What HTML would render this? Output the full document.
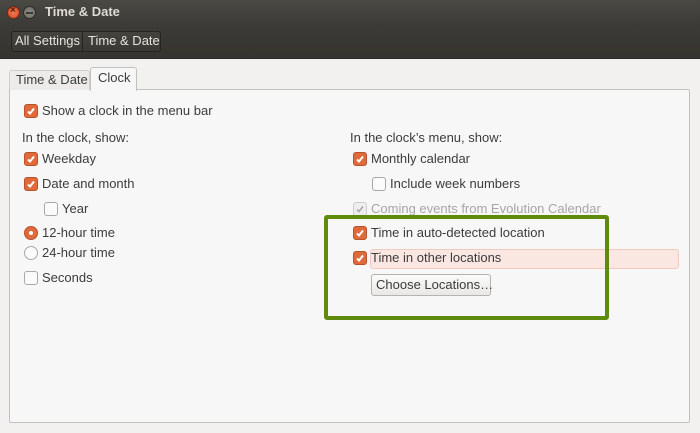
<!DOCTYPE html>
<html><head><style>
*{margin:0;padding:0;box-sizing:border-box}
body{width:700px;height:433px;background:#f2f1f0;font-family:"Liberation Sans","DejaVu Sans",sans-serif;font-size:13px;color:#3c3c3c;position:relative;overflow:hidden}
.a{position:absolute;white-space:nowrap}
.title{left:0;top:0;width:700px;height:25px;background:linear-gradient(#4a4944,#3c3b37);}
.tool{left:0;top:25px;width:700px;height:34px;background:linear-gradient(#3c3b37,#35342f);border-bottom:1px solid #2a2926}
.cb{position:absolute;width:14px;height:14px;border-radius:3px;background:#df6a3b;border:1px solid #b8532c}
.cb svg{position:absolute;left:1px;top:1px}
.ub{position:absolute;width:14px;height:14px;border-radius:3px;background:#fbfbfb;border:1px solid #a9a9a9}
.t{position:absolute;white-space:nowrap;line-height:16px}
</style></head><body>
<div class="a title"></div>
<div class="a" style="left:7px;top:6px;width:13px;height:13px;border-radius:50%;background:radial-gradient(#f07a56,#d4461f);border:1px solid #6b2a18"></div>
<div class="a" style="left:10px;top:5px;color:#5a1b0b;font-size:10px;font-weight:bold">×</div>
<div class="a" style="left:23px;top:6px;width:13px;height:13px;border-radius:50%;background:radial-gradient(#8d8b85,#6a6964);border:1px solid #2d2c29"></div>
<div class="a" style="left:26px;top:12px;width:7px;height:1.5px;background:#3c3b37"></div>
<div class="a" style="left:45px;top:4px;color:#dfdbd2;font-weight:bold;font-size:13px">Time &amp; Date</div>
<div class="a tool"></div>
<div class="a" style="left:11px;top:31px;width:150px;height:21px;border:1px solid #25241f;border-radius:3px;background:linear-gradient(#44433e,#3a3935)"></div>
<div class="a" style="left:82px;top:32px;width:1px;height:19px;background:#25241f"></div>
<div class="a" style="left:15px;top:33px;color:#e6e3dc;font-size:13px">All Settings</div>
<div class="a" style="left:88px;top:33px;color:#e6e3dc;font-size:13px">Time &amp; Date</div>
<!-- panel -->
<div class="a" style="left:9px;top:89px;width:681px;height:334px;background:#f7f7f7;border:1px solid #c2c1be;border-radius:2px"></div>
<div class="a" style="left:9px;top:70px;width:81px;height:20px;border:1px solid #cfcecb;border-bottom:none;border-radius:3px 3px 0 0;background:#ecebe9"></div>
<div class="a" style="left:16px;top:72px;">Time &amp; Date</div>
<div class="a" style="left:90px;top:67px;width:47px;height:24px;border:1px solid #c2c1be;border-bottom:none;border-radius:3px 3px 0 0;background:#f7f7f7"></div>
<div class="a" style="left:98px;top:70px;font-size:13px">Clock</div>

<div class="cb" style="left:24px;top:104px"><svg width="10" height="10"><path d="M2 5.5l2 2 4-5" stroke="#fff" stroke-width="2" fill="none"/></svg></div>
<div class="t" style="left:42px;top:103px">Show a clock in the menu bar</div>
<div class="t" style="left:22px;top:130px">In the clock, show:</div>
<div class="cb" style="left:24px;top:152px"><svg width="10" height="10"><path d="M2 5.5l2 2 4-5" stroke="#fff" stroke-width="2" fill="none"/></svg></div>
<div class="t" style="left:42px;top:151px">Weekday</div>
<div class="cb" style="left:24px;top:177px"><svg width="10" height="10"><path d="M2 5.5l2 2 4-5" stroke="#fff" stroke-width="2" fill="none"/></svg></div>
<div class="t" style="left:42px;top:176px">Date and month</div>
<div class="ub" style="left:44px;top:202px"></div>
<div class="t" style="left:62px;top:201px">Year</div>
<div class="a" style="left:24px;top:226px;width:14px;height:14px;border-radius:50%;background:#df6a3b;border:1px solid #b8532c"></div>
<div class="a" style="left:29px;top:231px;width:4px;height:4px;border-radius:50%;background:#fff"></div>
<div class="t" style="left:42px;top:225px">12-hour time</div>
<div class="a" style="left:24px;top:246px;width:14px;height:14px;border-radius:50%;background:#fbfbfb;border:1px solid #a9a9a9"></div>
<div class="t" style="left:42px;top:245px">24-hour time</div>
<div class="ub" style="left:24px;top:271px"></div>
<div class="t" style="left:42px;top:270px">Seconds</div>

<div class="t" style="left:350px;top:130px">In the clock’s menu, show:</div>
<div class="cb" style="left:353px;top:152px"><svg width="10" height="10"><path d="M2 5.5l2 2 4-5" stroke="#fff" stroke-width="2" fill="none"/></svg></div>
<div class="t" style="left:371px;top:151px">Monthly calendar</div>
<div class="ub" style="left:372px;top:177px"></div>
<div class="t" style="left:390px;top:176px">Include week numbers</div>
<div class="a" style="left:353px;top:202px;width:14px;height:14px;border-radius:3px;background:#eee;border:1px solid #ccc"><svg width="12" height="12" style="position:absolute;left:0;top:0"><path d="M3 6.5l2 2 4-5" stroke="#aaa" stroke-width="1.6" fill="none"/></svg></div>
<div class="t" style="left:371px;top:201px;color:#a6a6a6">Coming events from Evolution Calendar</div>
<div class="a" style="left:370px;top:249px;width:309px;height:20px;background:#fbe7e2;border:1px solid #f1c9bd;border-radius:3px"></div>
<div class="cb" style="left:353px;top:226px"><svg width="10" height="10"><path d="M2 5.5l2 2 4-5" stroke="#fff" stroke-width="2" fill="none"/></svg></div>
<div class="t" style="left:371px;top:225px">Time in auto-detected location</div>
<div class="cb" style="left:353px;top:251px"><svg width="10" height="10"><path d="M2 5.5l2 2 4-5" stroke="#fff" stroke-width="2" fill="none"/></svg></div>
<div class="t" style="left:371px;top:250px">Time in other locations</div>
<div class="a" style="left:371px;top:274px;width:120px;height:22px;border:1px solid #b4b3b0;border-radius:3px;background:linear-gradient(#fbfbfa,#e9e8e6)"></div>
<div class="t" style="left:376px;top:277px">Choose Locations…</div>
<div class="a" style="left:324px;top:215px;width:285px;height:105px;border:4px solid #5f8a0e;border-radius:3px"></div>
</body></html>
